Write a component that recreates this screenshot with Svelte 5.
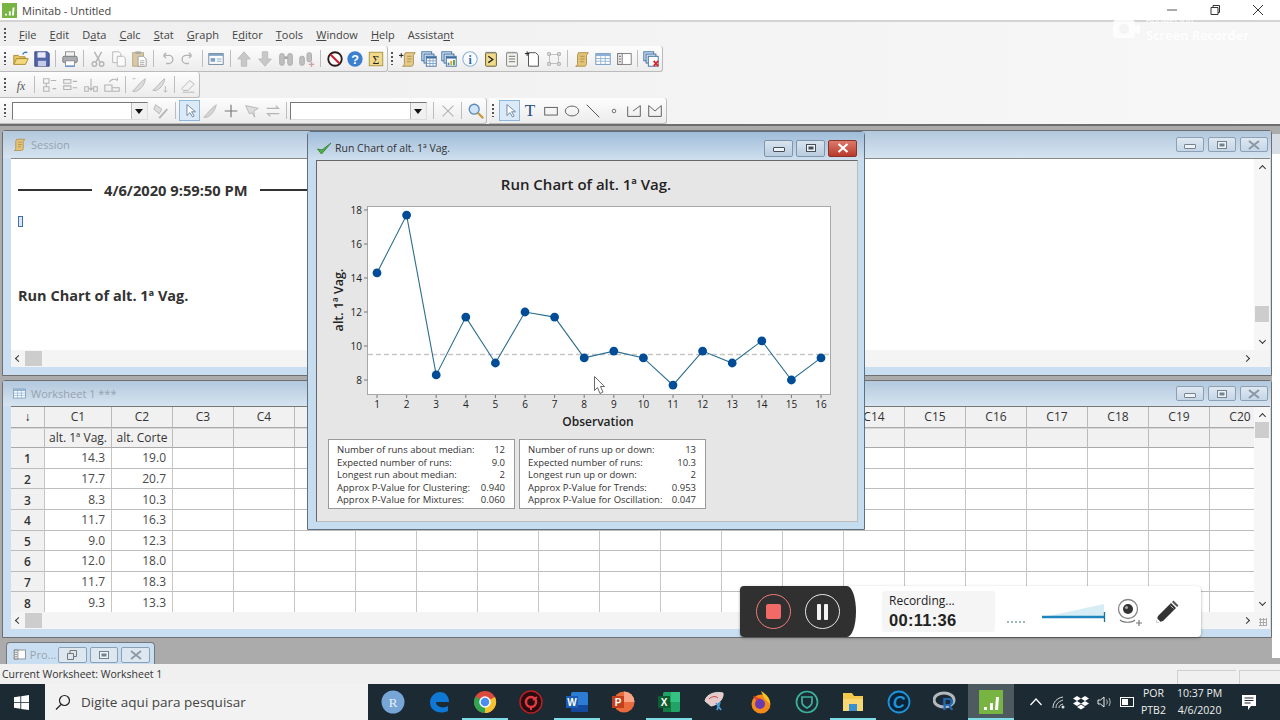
<script>
  const g = '#b4b4b4';
  const icons = {
    folder: `<path d="M2 16V6h5l1.500 1.500h6V10" fill="#e8c65e" stroke="#a8862c"/><path d="M2 16l3-6.500h13L15 16z" fill="#f3d77c" stroke="#a8862c"/><path d="M12 5c1-2.500 3-3 5-2" fill="none" stroke="#3c78c0" stroke-width="1.600"/>`,
    save: `<path d="M2 2h14l2 2v14H2z" fill="#5363a8" stroke="#39447f"/><rect x="5" y="2.500" width="9" height="6" fill="#e6e9f5"/><rect x="5.500" y="12" width="9" height="6" fill="#c5cbe6"/>`,
    print: `<rect x="5" y="2" width="10" height="6" fill="#f2f2f2" stroke="#8a8a8a"/><rect x="2" y="7" width="16" height="7" rx="1.500" fill="#a9adb3" stroke="#777"/><rect x="5" y="12" width="10" height="6" fill="#fff" stroke="#8a8a8a"/><path d="M5 18h10" stroke="#5d93cc" stroke-width="1.500"/>`,
    cut: `<path d="M6 2l6 11M14 2L8 13" stroke="${g}" stroke-width="1.600"/><circle cx="6" cy="15.500" r="2.500" fill="none" stroke="${g}" stroke-width="1.500"/><circle cx="14" cy="15.500" r="2.500" fill="none" stroke="${g}" stroke-width="1.500"/>`,
    copy: `<path d="M3 2h7l2 2v10H3z" fill="#fafafa" stroke="${g}"/><path d="M8 7h7l2 2v9H8z" fill="#fafafa" stroke="${g}"/>`,
    paste: `<rect x="3" y="3" width="12" height="15" fill="#d9c9a5" stroke="#b5a57e"/><rect x="6" y="1.500" width="6" height="3" fill="#aaa"/><path d="M9 7h6l3 3v8H9z" fill="#fff" stroke="#999"/><path d="M11 12h5M11 14h5M11 16h5" stroke="#aaa"/>`,
    undo: `<path d="M6 6h6a4 4 0 0 1 0 9H9M6 6l3-3M6 6l3 3" fill="none" stroke="${g}" stroke-width="1.500"/>`,
    redo: `<path d="M14 6H8a4 4 0 0 0 0 9h3M14 6l-3-3M14 6l-3 3" fill="none" stroke="${g}" stroke-width="1.500"/>`,
    win: `<rect x="2" y="4" width="16" height="12" fill="#fbfbfb" stroke="#6b8299"/><path d="M2 5.500h16" stroke="#7da1c6" stroke-width="2"/><rect x="4" y="9" width="5" height="4" fill="#7da1c6"/><path d="M11 10h5M11 12.500h5" stroke="#7da1c6"/>`,
    up: `<path d="M10 2l7 8h-4v8H7v-8H3z" fill="#c8c8c8" stroke="#bbb"/>`,
    down: `<path d="M10 18l7-8h-4V2H7v8H3z" fill="#c8c8c8" stroke="#bbb"/>`,
    bino: `<rect x="3" y="4" width="5" height="13" rx="2" fill="#c0c0c0" stroke="#a8a8a8"/><rect x="12" y="4" width="5" height="13" rx="2" fill="#c0c0c0" stroke="#a8a8a8"/><rect x="8" y="7" width="4" height="3" fill="#aaa"/>`,
    bino2: `<rect x="2" y="7" width="5" height="10" rx="2" fill="#c0c0c0" stroke="#a8a8a8"/><rect x="10" y="3" width="5" height="10" rx="2" fill="#c0c0c0" stroke="#a8a8a8"/><path d="M12 16h6M15 13v6" stroke="#c9a4a4" stroke-width="1.500"/>`,
    stop: `<circle cx="10" cy="10" r="7.500" fill="#fff" stroke="#2a1a1a" stroke-width="2"/><path d="M5 5l10 10" stroke="#c8222a" stroke-width="2.400"/>`,
    help: `<circle cx="10" cy="10" r="8.500" fill="#3b7fd0"/><text x="10" y="15" text-anchor="middle" font-size="14" font-weight="700" fill="#fff" font-family="Liberation Sans">?</text>`,
    sigma: `<rect x="2.500" y="2.500" width="15" height="15" fill="#efd98a" stroke="#a8913f"/><text x="10" y="15" text-anchor="middle" font-size="13" fill="#222" font-family="Liberation Serif">Σ</text>`,
    scriptp: `<path d="M7 3h11l-2 3v9c0 2-1 3-2 3H4c1 0 2-1 2-3V6z" fill="#e4c98a" stroke="#a98c4a"/><path d="M9 7h5M9 10h5M9 13h4" stroke="#a98c4a"/><path d="M0 6h5M2.500 3.500v5" stroke="#111"/>`,
    ws: `<rect x="2" y="2" width="11" height="10" fill="#cfe0f2" stroke="#3e6c9e"/><rect x="4.500" y="4.500" width="11" height="10" fill="#cfe0f2" stroke="#3e6c9e"/><rect x="7" y="7" width="11" height="11" fill="#fff" stroke="#3e6c9e"/><path d="M7 8.500h11" stroke="#3e6c9e" stroke-width="2"/><path d="M7 12h11M7 15h11M11 10v8M14.500 10v8" stroke="#7da1c6"/>`,
    gr: `<rect x="2" y="2" width="11" height="10" fill="#cfe0f2" stroke="#3e6c9e"/><rect x="4.500" y="4.500" width="11" height="10" fill="#cfe0f2" stroke="#3e6c9e"/><rect x="7" y="7" width="11" height="11" fill="#fff" stroke="#3e6c9e"/><path d="M7 8.500h11" stroke="#3e6c9e" stroke-width="2"/><path d="M9.500 17v-3" stroke="#3e8ec4" stroke-width="2"/><path d="M12.500 17v-5" stroke="#d9a62e" stroke-width="2"/><path d="M15.500 17v-6" stroke="#4c9a4c" stroke-width="2"/>`,
    info: `<circle cx="10" cy="10" r="8" fill="#f8fbff" stroke="#8fb1d4" stroke-width="1.200"/><text x="10" y="15" text-anchor="middle" font-size="13" font-weight="700" fill="#2d68a8" font-family="Liberation Serif">i</text>`,
    sess: `<rect x="4" y="3" width="12" height="15" rx="1" fill="#f0dc88" stroke="#57512c"/><path d="M4 3h12" stroke="#888" stroke-width="2" stroke-dasharray="1 1"/><path d="M7 7l5 3.500-5 3.500" fill="none" stroke="#222" stroke-width="1.500"/>`,
    note: `<rect x="4" y="3" width="12" height="15" rx="1" fill="#f4f4ee" stroke="#777"/><path d="M4 3h12" stroke="#999" stroke-width="2" stroke-dasharray="1 1"/><path d="M6.500 7h7M6.500 10h7M6.500 13h7" stroke="#666"/>`,
    newn: `<path d="M5 3h8l3 3v12H5z" fill="#fff" stroke="#444"/><path d="M1 4h5M3.500 1.500v5" stroke="#111"/>`,
    crop: `<rect x="5" y="5" width="10" height="10" fill="none" stroke="#bbb"/><path d="M3 3h3v3H3zM14 3h3v3h-3zM3 14h3v3H3zM14 14h3v3h-3z" fill="#e4e4e4" stroke="#aaa"/>`,
    script: `<path d="M6 3h11l-2 3v9c0 2-1 3-2 3H3c1 0 2-1 2-3V6z" fill="#e4c375" stroke="#a98c4a"/><path d="M8 7h5M8 10h5M8 13h4" stroke="#a98c4a"/>`,
    table: `<rect x="2" y="4" width="16" height="12" fill="#fff" stroke="#6d93bb"/><path d="M2 5.500h16" stroke="#8db1d4" stroke-width="2.500"/><path d="M2 9.500h16M2 12.500h16M7.500 7v9M12.500 7v9" stroke="#8db1d4"/>`,
    panel: `<rect x="3" y="4" width="15" height="12" fill="#fff" stroke="#777"/><rect x="3" y="4" width="5" height="12" fill="#eee" stroke="#777"/><path d="M4.500 7h2M4.500 10h2M4.500 13h2" stroke="#555"/>`,
    closeall: `<rect x="2" y="2" width="11" height="10" fill="#cfe0f2" stroke="#3e6c9e"/><rect x="4.500" y="4.500" width="11" height="10" fill="#cfe0f2" stroke="#3e6c9e"/><rect x="7" y="7" width="11" height="11" fill="#fff" stroke="#3e6c9e"/><path d="M13 12l5 6M18 12l-5 6" stroke="#d8262c" stroke-width="2"/>`,
    fx: `<text x="10" y="15" text-anchor="middle" font-size="13" font-style="italic" fill="#555" font-family="Liberation Serif">fx</text>`,
    g1: `<path d="M4 3h6v5H4zM4 12h6v5H4zM7 8v4M12 5h6M14 14h4" fill="none" stroke="${g}" stroke-width="1.200"/>`,
    g2: `<path d="M3 4h8v4H3zM3 11h8v4H3zM13 6h5M13 13h5" fill="none" stroke="${g}" stroke-width="1.200"/>`,
    g3: `<path d="M3 12h4v5H3zM13 12h4v5h-4zM10 3v13M8 13l2 3 2-3" fill="none" stroke="${g}" stroke-width="1.200"/>`,
    g4: `<path d="M2 10h8v7H2zM10 13h8v4h-8zM7 7c2-4 6-4 9-2M16 5V2" fill="none" stroke="${g}" stroke-width="1.200"/>`,
    pen1: `<path d="M3 17C8 12 12 6 17 3c0 5-4 11-10 14z" fill="#ddd" stroke="${g}"/><path d="M3 3l3 0" stroke="${g}"/>`,
    pen2: `<path d="M2 16C7 12 11 6 15 3c0 5-3 10-9 13z" fill="#ddd" stroke="${g}"/><path d="M16 11v7M14 16l2 2 2-2" fill="none" stroke="${g}"/>`,
    erase: `<path d="M3 14l9-9 5 4-7 7H5z" fill="#f2f2f2" stroke="${g}"/><path d="M4 18h13" stroke="${g}"/>`,
    paint: `<path d="M4 3l7 5-3 5-6-5z" fill="#ddd" stroke="${g}"/><path d="M17 8L8 18" stroke="${g}" stroke-width="2"/>`,
    arrow: `<path d="M7 3l0 13 3.500-3.500 3 5 2-1-3-5H17z" fill="#fff" stroke="#5e7a99"/>`,
    brush: `<path d="M3 17C7 13 12 6 17 3c-1 5-4 11-10 14z" fill="#d4d4d4" stroke="#bbb"/>`,
    plus: `<path d="M10 3v14M3 10h14" stroke="#777" stroke-width="1.300"/>`,
    flag: `<path d="M3 4l14 3-5 3 1 7-3-5-3 1z" fill="#ddd" stroke="${g}"/>`,
    swap: `<path d="M3 7h13l-3-3M17 13H4l3 3" fill="none" stroke="${g}" stroke-width="1.400"/>`,
    x: `<path d="M4 4l12 12M16 4L4 16" stroke="${g}" stroke-width="1.300"/>`,
    mag: `<circle cx="8" cy="8" r="5.500" fill="#cfe4f7" stroke="#5a8ab8" stroke-width="1.500"/><path d="M12 12l6 6" stroke="#c79a3c" stroke-width="2.500"/>`,
    t: `<text x="10" y="16" text-anchor="middle" font-size="19" fill="#234d86" font-family="Liberation Serif">T</text>`,
    rect: `<rect x="3" y="6" width="14" height="8.500" fill="none" stroke="#555"/>`,
    oval: `<ellipse cx="10" cy="10" rx="7.500" ry="5.500" fill="none" stroke="#555"/>`,
    line: `<path d="M3 3l14 14" stroke="#555" stroke-width="1.100"/>`,
    dot: `<circle cx="10" cy="10" r="2" fill="none" stroke="#666"/>`,
    poly: `<path d="M3 5v11h14V4L9 10" fill="none" stroke="#555"/>`,
    poly2: `<path d="M3 4v12h14V4l-7 6z" fill="none" stroke="#555"/>`
  };

  const menus = [['','F','ile'],['','E','dit'],['D','a','ta'],['','C','alc'],['','S','tat'],['','G','raph'],['E','d','itor'],['','T','ools'],['','W','indow'],['','H','elp'],['Assista','n','t']];
  const row1a = ['folder','save','|','print','|','cut','copy','paste','|','undo','redo','|','win','|','up','down','bino','bino2','|','stop','help','sigma'];
  const row1b = ['scriptp','ws','gr','info','sess','note','newn','crop','|','script','table','panel','|','closeall'];
  const row2 = ['fx','|','g1','g2','g3','g4','|','pen1','pen2','|','erase'];
  const row3a = ['paint','|','arrow*','brush','plus','flag','swap','|'];
  const row3c = ['|','x','|','mag'];
  const row3d = ['arrow*','t','rect','oval','line','dot','poly','poly2'];

  const col1 = ['14.3','17.7','8.3','11.7','9.0','12.0','11.7','9.3'];
  const col2 = ['19.0','20.7','10.3','16.3','12.3','18.0','18.3','13.3'];
  const colNames = Array.from({ length: 20 }, (_, i) => 'C' + (i + 1));

  const values = [14.3,17.7,8.3,11.7,9.0,12.0,11.7,9.3,9.7,9.3,7.7,9.7,9.0,10.3,8.0,9.3];
  const px = (i) => 377 + i * 29.6;
  const py = (v) => 380 - (v - 8) * 17;
  const points = values.map((v, i) => px(i) + ',' + py(v)).join(' ');
  const yTicks = [8, 10, 12, 14, 16, 18];

  const stats1 = [['Number of runs about median:','12'],['Expected number of runs:','9.0'],['Longest run about median:','2'],['Approx P-Value for Clustering:','0.940'],['Approx P-Value for Mixtures:','0.060']];
  const stats2 = [['Number of runs up or down:','13'],['Expected number of runs:','10.3'],['Longest run up or down:','2'],['Approx P-Value for Trends:','0.953'],['Approx P-Value for Oscillation:','0.047']];

  const apps = [
    { n: 'r' }, { n: 'edge' }, { n: 'chrome', on: 1 }, { n: 'bit' }, { n: 'word', on: 1 }, { n: 'ppt' }, { n: 'excel', on: 1 },
    { n: 'snip' }, { n: 'fox' }, { n: 'shield' }, { n: 'files', on: 1 }, { n: 'c' }, { n: 'rlogo' }, { n: 'mtb', on: 1, cur: 1 }
  ];
  const appIcons = {
    r: `<circle cx="12" cy="12" r="11.500" fill="#76a5d6"/><text x="12" y="17" text-anchor="middle" font-size="13" fill="#e8f0fa" font-family="Liberation Serif">R</text>`,
    edge: `<path d="M3 13C3 6 8 2 13 2c6 0 9 5 9 10H9c0 5 7 7 12 4v5c-6 3-17 2-18-8z" fill="#0f78d4"/>`,
    chrome: `<circle cx="12" cy="12" r="11" fill="#dc4a3d"/><path d="M12 12L2.500 6.500A11 11 0 0 0 12 23z" fill="#2fa54f"/><path d="M12 12v11A11 11 0 0 0 22 7z" fill="#f4c430"/><circle cx="12" cy="12" r="5" fill="#4a8cf0" stroke="#fff" stroke-width="1.500"/>`,
    bit: `<circle cx="12" cy="12" r="11" fill="#2a0c10" stroke="#b81f26" stroke-width="1.500"/><circle cx="12" cy="12" r="5" fill="none" stroke="#e33a3f" stroke-width="2.500"/><path d="M14 10l4-3M12 17v3" stroke="#e33a3f" stroke-width="2"/>`,
    word: `<rect x="6" y="2" width="17" height="20" rx="1.500" fill="#2b7cd3"/><rect x="6" y="15" width="17" height="7" fill="#134a9e"/><rect x="1" y="6" width="12" height="12" fill="#1a5bb8"/><text x="7" y="16" text-anchor="middle" font-size="10" font-weight="700" fill="#fff" font-family="Liberation Sans">W</text>`,
    ppt: `<circle cx="13" cy="12" r="10.500" fill="#e86a3d"/><path d="M13 12V1.500A10.500 10.500 0 0 1 23.500 12z" fill="#f7a487"/><rect x="1" y="6" width="12" height="12" fill="#c43e1c"/><text x="7" y="16" text-anchor="middle" font-size="10" font-weight="700" fill="#fff" font-family="Liberation Sans">P</text>`,
    excel: `<rect x="6" y="2" width="17" height="20" rx="1.500" fill="#21a366"/><rect x="14" y="2" width="9" height="10" fill="#33c481"/><rect x="6" y="12" width="8" height="10" fill="#107c41"/><rect x="1" y="6" width="12" height="12" fill="#0e5c2f"/><text x="7" y="16" text-anchor="middle" font-size="10" font-weight="700" fill="#fff" font-family="Liberation Sans">X</text>`,
    snip: `<path d="M2 11C3 4 13 1 20 3c1 6-5 12-12 13z" fill="#e9c9c9" stroke="#ddd"/><path d="M6 9c3-3 7-3 9-1" stroke="#b24a4a" fill="none"/><path d="M13 13l5 7M17 12l-3 8" stroke="#4f9ed8" stroke-width="1.800"/>`,
    fox: `<circle cx="12" cy="14" r="9.500" fill="#f28a1c"/><path d="M12 1c5 3 9 7 9 13L15 8z" fill="#f7c52a"/><path d="M4 6l4 6 5-3" fill="#e6452c"/><circle cx="11" cy="14" r="5" fill="#6a3bb0"/>`,
    shield: `<circle cx="12" cy="12" r="10.500" fill="none" stroke="#3bb39a" stroke-width="1.700"/><path d="M7 7h10v5c0 3-3 5-5 6-2-1-5-3-5-6z" fill="none" stroke="#3bb39a" stroke-width="1.700"/>`,
    files: `<path d="M2 3h9l2 3h9v15H2z" fill="#f2c94c"/><rect x="2" y="9" width="20" height="12" fill="#f8d775"/><rect x="8" y="14" width="8" height="7" fill="#3a8fd0"/>`,
    c: `<circle cx="12" cy="12" r="10.500" fill="#0c2438" stroke="#1f93d8" stroke-width="1.800"/><text x="12" y="18" text-anchor="middle" font-size="17" font-weight="700" font-style="italic" fill="#1f93d8" font-family="Liberation Sans">C</text>`,
    rlogo: `<ellipse cx="11" cy="10" rx="10" ry="7" fill="none" stroke="#b3b8bf" stroke-width="3"/><text x="15" y="20" text-anchor="middle" font-size="16" font-weight="700" fill="#2368b3" font-family="Liberation Sans">R</text>`,
    mtb: `<rect x="0" y="0" width="24" height="24" fill="#78b441"/><path d="M5 20v-3h3v3zM11 20v-7h3v7zM16 20l1-13h3l-1 13z" fill="#fff"/>`
  };
</script>

{#snippet ic(name, size = 20)}
  <svg class="ic" width={size} height={size} viewBox="0 0 20 20">{@html icons[name]}</svg>
{/snippet}

{#snippet items(list)}
  {#each list as it}
    {#if it === '|'}
      <span class="sep"></span>
    {:else if it.endsWith('*')}
      <span class="btn picked">{@render ic(it.slice(0, -1), 17)}</span>
    {:else}
      <span class="btn">{@render ic(it, 18)}</span>
    {/if}
  {/each}
{/snippet}

{#snippet winBtns()}
  <div class="wbtns">
    <span class="wb"><i class="mn"></i></span>
    <span class="wb"><i class="mx"></i></span>
    <span class="wb"><svg width="12" height="10" viewBox="0 0 12 10"><path d="M1 1l10 8M11 1L1 9" stroke="#8a97a5" stroke-width="2"/></svg></span>
  </div>
{/snippet}

{#snippet combo(w)}
  <span class="combo" style="width:{w}px"><span class="drop"></span></span>
{/snippet}

<div class="screen">
  <header class="titlebar">
    <svg width="15" height="15" viewBox="0 0 24 24" class="appicon">{@html appIcons.mtb}</svg>
    <span class="apptitle">Minitab - Untitled</span>
    <div class="caption">
      <svg width="14" height="14" viewBox="0 0 14 14"><path d="M2 7h10" stroke="#555"/></svg>
      <svg width="14" height="14" viewBox="0 0 14 14"><path d="M3 4.500h7v7H3zM5 4.500V2.500h6.500v7H10" fill="none" stroke="#333"/></svg>
      <svg width="14" height="14" viewBox="0 0 14 14"><path d="M2 2l10 10M12 2L2 12" stroke="#333"/></svg>
    </div>
  </header>

  <nav class="menubar">
    <span class="grip"></span>
    {#each menus as [a, k, b]}
      <span class="menu">{a}<u>{k}</u>{b}</span>
    {/each}
  </nav>

  <div class="tbrow">
    <div class="bar"><span class="grip"></span>{@render items(row1a)}</div>
    <div class="bar"><span class="grip"></span>{@render items(row1b)}</div>
  </div>
  <div class="tbrow">
    <div class="bar"><span class="grip"></span>{@render items(row2)}</div>
  </div>
  <div class="tbrow">
    <div class="bar third">
      <span class="grip"></span>
      {@render combo(136)}
      {@render items(row3a)}
      {@render combo(137)}
      {@render items(row3c)}
    </div>
    <div class="bar"><span class="grip"></span>{@render items(row3d)}</div>
  </div>

  <main class="mdi">
    <div class="backwin"></div>

    <section class="win session">
      <div class="wtitle">
        <svg width="15" height="15" viewBox="0 0 20 20" class="wicon">{@html icons.script}</svg>
        <span class="wname">Session</span>
        {@render winBtns()}
      </div>
      <div class="sbody">
        <div class="sdoc">
          <div class="stamp"><span class="rule a"></span><b>4/6/2020 9:59:50 PM</b><span class="rule"></span></div>
          <span class="caret"></span>
          <h2>Run Chart of alt. 1ª Vag.</h2>
        </div>
        <div class="vscroll">
          <span class="chev up"></span>
          <span class="vthumb"></span>
          <span class="chev dn"></span>
        </div>
      </div>
      <div class="hscroll"><span class="chev lf"></span><span class="hthumb"></span><span class="chev rt"></span></div>
    </section>

    <section class="win sheet">
      <div class="wtitle">
        <svg width="15" height="15" viewBox="0 0 20 20" class="wicon">{@html icons.table}</svg>
        <span class="wname">Worksheet 1 ***</span>
        {@render winBtns()}
      </div>
      <div class="sheetbody">
        <div class="grid">
          <div class="cell head corner">↓</div>
          {#each colNames as c}<div class="cell head">{c}</div>{/each}
          <div class="cell head name"></div>
          <div class="cell head name">alt. 1ª Vag.</div>
          <div class="cell head name">alt. Corte</div>
          {#each colNames.slice(2) as c}<div class="cell head name"></div>{/each}
          {#each col1 as v, r}
            <div class="cell rowno">{r + 1}</div>
            <div class="cell num">{v}</div>
            <div class="cell num">{col2[r]}</div>
            {#each colNames.slice(2) as c}<div class="cell"></div>{/each}
          {/each}
        </div>
        <div class="vscroll sv">
          <span class="chev up"></span>
          <span class="vthumb"></span>
          <span class="chev dn"></span>
        </div>
      </div>
      <div class="hscroll sh"><span class="chev lf"></span><span class="hthumb"></span><span class="chev rt"></span><span class="corner-grip"></span></div>
    </section>

    <section class="win chartwin">
      <div class="ctitle">
        <svg width="16" height="15" viewBox="0 0 16 15"><path d="M1.500 8l4 5L15 2 6 9z" fill="#4fb04a" stroke="#3d8a3a"/></svg>
        <span>Run Chart of alt. 1ª Vag.</span>
        <div class="cbtns">
          <span class="cb"><i class="mn dark"></i></span>
          <span class="cb"><i class="mx dark"></i></span>
          <span class="cb red"><svg width="12" height="10" viewBox="0 0 12 10"><path d="M1.500 1l9 8M10.500 1l-9 8" stroke="#fff" stroke-width="2.200"/></svg></span>
        </div>
      </div>
      <div class="cbody">
        <svg class="plot" width="542" height="278" viewBox="317 161 542 278">
          <text x="586" y="190" text-anchor="middle" class="ptitle">Run Chart of alt. 1ª Vag.</text>
          <rect x="367.500" y="206.500" width="463" height="188" fill="#fff" stroke="#a8a8a8"/>
          {#each yTicks as t}
            <path d="M364 {py(t)}h3.500" stroke="#777"/>
            <text x="362" y={py(t) + 3.500} text-anchor="end" class="tick">{t}</text>
          {/each}
          <line x1="368" x2="830" y1="354.500" y2="354.500" stroke="#c6c6c6" stroke-width="1.300" stroke-dasharray="5 3"/>
          <polyline points={points} fill="none" stroke="#2b6d8f" stroke-width="1.100"/>
          {#each values as v, i}
            <circle cx={px(i)} cy={py(v)} r="4.400" fill="#004c97"/>
            <path d="M{px(i)} 395v3" stroke="#777"/>
            <text x={px(i)} y="408" text-anchor="middle" class="tick">{i + 1}</text>
          {/each}
          <text x="598" y="426" text-anchor="middle" class="axis">Observation</text>
          <text transform="translate(343 300) rotate(-90)" text-anchor="middle" class="axis small">alt. 1ª Vag.</text>
          <path d="M594.500 376.500v14l3-3 2.500 6 3-1.500-2.500-5.500h4z" fill="#fff" stroke="#444" stroke-width=".8"/>
        </svg>
        <div class="statrow">
          <div class="stat first">
            {#each stats1 as [l, v]}<div class="sline"><span>{l}</span><span>{v}</span></div>{/each}
          </div>
          <div class="stat">
            {#each stats2 as [l, v]}<div class="sline"><span>{l}</span><span>{v}</span></div>{/each}
          </div>
        </div>
      </div>
    </section>

    <div class="projtab">
      <svg width="15" height="15" viewBox="0 0 20 20">{@html icons.panel}</svg>
      <span class="pro">Pro...</span>
      <span class="pb"><svg width="12" height="12" viewBox="0 0 12 12"><path d="M1.500 4.500h6v6h-6zM4 4.500V1.500h6.500v6h-3" fill="none" stroke="#777"/></svg></span>
      <span class="pb"><i class="mx"></i></span>
      <span class="pb"><svg width="12" height="10" viewBox="0 0 12 10"><path d="M1 1l10 8M11 1L1 9" stroke="#8a97a5" stroke-width="1.700"/></svg></span>
    </div>

    <div class="recorder">
      <div class="rdark">
        <span class="rbtn stopb"><i></i></span>
        <span class="rbtn pauseb"><i></i><i></i></span>
      </div>
      <div class="rclock">
        <span class="rlabel">Recording...</span>
        <strong>00:11:36</strong>
      </div>
      <span class="rdots"></span>
      <svg class="wave" width="64" height="22" viewBox="0 0 64 22"><path d="M2 16L62 3v13z" fill="#d6edf6"/><path d="M0 16h62" stroke="#1f86bd" stroke-width="2.400"/><path d="M62.500 11v10" stroke="#1f6f9d" stroke-width="1.300"/></svg>
      <svg class="cam" width="26" height="30" viewBox="0 0 26 30"><circle cx="11" cy="11" r="9.500" fill="#fff" stroke="#888" stroke-width="1.300"/><circle cx="11" cy="11" r="5" fill="#333"/><circle cx="9.500" cy="9.500" r="1.500" fill="#aaa"/><path d="M3 22c3 3 12 3 15 0M19 25h6M22 22v6" fill="none" stroke="#777" stroke-width="1.200"/></svg>
      <svg class="pen" width="24" height="24" viewBox="0 0 24 24"><path d="M1 23l2-7L16 3l5 5L8 21z" fill="#333"/><path d="M17 2l1.500-1.500 5 5L22 7z" fill="#555"/><path d="M1 23l1.300-4.500 3.200 3.200z" fill="#fff"/><path d="M15.500 5.500l3 3" stroke="#fff" stroke-width=".7"/></svg>
    </div>
  </main>

  <div class="watermark">
    <svg width="28" height="24" viewBox="0 0 28 24"><rect x="1" y="1" width="22" height="18" rx="3" fill="#fff" opacity=".8"/><circle cx="12" cy="10" r="5" fill="#f4f4f4"/><path d="M23 7l5-2v10l-5-2z" fill="#fff" opacity=".8"/></svg>
    <div class="wtext"><span>Apowersoft</span><span class="big">Screen Recorder</span></div>
  </div>

  <footer class="status">
    <span>Current Worksheet: Worksheet 1</span>
    <span class="panel p1"></span>
    <span class="panel p2"></span>
  </footer>

  <div class="taskbar">
    <span class="start">
      <svg width="15" height="15" viewBox="0 0 16 16"><path d="M0 2.300l6.800-1v6.300H0zM7.700 1.200L16 0v7.600H7.700zM0 8.400h6.800v6.300l-6.800-1zM7.700 8.400H16V16l-8.300-1.200z" fill="#fff"/></svg>
    </span>
    <div class="search">
      <svg width="16" height="16" viewBox="0 0 16 16"><circle cx="9.500" cy="6.500" r="5" fill="none" stroke="#222" stroke-width="1.200"/><path d="M6 10.500L1 15.500" stroke="#222" stroke-width="1.300"/></svg>
      <span>Digite aqui para pesquisar</span>
    </div>
    {#each apps as a}
      <span class="app" class:on={a.on} class:cur={a.cur}>
        <svg width="24" height="24" viewBox="0 0 24 24">{@html appIcons[a.n]}</svg>
      </span>
    {/each}
    <div class="tray">
      <svg width="14" height="10" viewBox="0 0 14 10"><path d="M1.500 8L7 2l5.500 6" fill="none" stroke="#fff" stroke-width="1.200"/></svg>
      <svg width="14" height="14" viewBox="0 0 14 14"><path d="M2 13C2 7 6 3 12 2M5 13c0-4 2-6 7-8M8 13c0-2 1-3 4-4" fill="none" stroke="#ddd"/><circle cx="12" cy="12" r="1.500" fill="#ddd"/></svg>
      <svg width="16" height="15" viewBox="0 0 16 15"><path d="M4 1l4 2.500L4 6 0 3.500zM12 1l4 2.500L12 6 8 3.500zM4 6l4 2.500L4 11 0 8.500zM12 6l4 2.500-4 2.500-4-2.500zM4 12l4-2.500 4 2.500-4 2.500z" fill="#fff"/></svg>
      <svg width="15" height="14" viewBox="0 0 15 14"><path d="M1 5h2.500L7 2v10L3.500 9H1z" fill="none" stroke="#eee"/><path d="M9.500 4.500c1 1.500 1 3.500 0 5M12 3c1.500 2.500 1.500 5.500 0 8" fill="none" stroke="#bbb"/></svg>
      <svg width="15" height="10" viewBox="0 0 15 10"><rect x=".5" y=".5" width="13" height="9" fill="none" stroke="#fff"/><rect x="2" y="2" width="6" height="6" fill="#fff"/></svg>
      <div class="lang"><span>POR</span><span>PTB2</span></div>
      <div class="clock"><span>10:37 PM</span><span>4/6/2020</span></div>
      <svg class="notif" width="16" height="17" viewBox="0 0 16 17"><path d="M1 1h14v11h-5l-3 4v-4H1z" fill="#fff"/><path d="M3.500 4h9M3.500 6.500h9M3.500 9h6" stroke="#1b2a33"/></svg>
    </div>
  </div>
</div>

<style>
  :global(body) {
    margin: 0;
    background: #ababab;
  }
  .screen {
    width: 1280px;
    height: 720px;
    display: flex;
    flex-direction: column;
    overflow: hidden;
    position: relative;
    font-family: "Open Sans", "Noto Sans", sans-serif;
    color: #333;
  }
  .ic {
    display: block;
  }

  .titlebar {
    height: 22px;
    flex: none;
    box-sizing: border-box;
    background: #fff;
    border-bottom: 2px solid #d4d4d4;
    display: flex;
    align-items: center;
    padding-left: 2px;
    font-size: 11px;
    color: #444;
  }
  .appicon {
    margin-right: 5px;
  }
  .caption {
    margin-left: auto;
    display: flex;
    gap: 29px;
    margin-right: 15px;
  }

  .menubar {
    height: 24px;
    flex: none;
    box-sizing: border-box;
    display: flex;
    align-items: center;
    gap: 13.100px;
    padding-left: 4px;
    background: linear-gradient(90deg, #efefef, #f7f7f7);
    font-size: 11px;
    color: #444;
  }
  .menubar .grip {
    margin-right: 0;
  }
  .menu u {
    text-underline-offset: 1px;
  }
  .grip {
    width: 2px;
    height: 13px;
    flex: none;
    margin: 0 4.500px 0 0;
    background: repeating-linear-gradient(180deg, #555 0 2px, transparent 2px 4px);
  }

  .tbrow {
    height: 26px;
    flex: none;
    display: flex;
    align-items: stretch;
    background: linear-gradient(90deg, #efefef, #f7f7f7);
  }
  .bar {
    display: flex;
    align-items: center;
    box-sizing: border-box;
    padding: 0 0 0 4px;
    margin-right: 0;
    background: linear-gradient(180deg, #fdfdfd, #ececec);
    border-right: 1px solid #bbb;
    border-bottom: 1px solid #bbb;
    border-radius: 0 3px 3px 0;
  }
  .bar + .bar {
    padding-left: 3px;
  }
  .third {
    margin-right: 2px;
  }
  .third .grip {
    margin-right: 6px;
  }
  .btn {
    width: 20.900px;
    height: 21px;
    flex: none;
    display: flex;
    align-items: center;
    justify-content: center;
    box-sizing: border-box;
  }
  .picked {
    border: 1px solid #8fb8dc;
    background: #dbeaf7;
  }
  .sep {
    width: 1px;
    height: 17px;
    margin: 0 3px;
    flex: none;
    background: #bdbdbd;
  }
  .combo {
    height: 18px;
    flex: none;
    box-sizing: border-box;
    background: #fff;
    border: 1px solid #777;
    border-right-color: #ddd;
    border-bottom-color: #ddd;
    display: flex;
    justify-content: flex-end;
    margin-right: 3px;
  }
  .drop {
    width: 15px;
    background: #f0f0f0;
    border-left: 1px solid #bbb;
    position: relative;
  }
  .drop::after {
    content: "";
    position: absolute;
    left: 3px;
    top: 6px;
    border: 4px solid transparent;
    border-top: 5px solid #111;
  }

  .mdi {
    flex: 1;
    position: relative;
    background: #ababab;
    border-top: 2px solid #6e6e6e;
    box-sizing: border-box;
    overflow: hidden;
  }
  .backwin {
    position: absolute;
    left: 1272px;
    top: 8px;
    width: 8px;
    height: 504px;
    background: #fff;
    border-top: 20px solid #d6dde4;
  }

  .win {
    position: absolute;
    box-sizing: border-box;
    display: flex;
    flex-direction: column;
    background: #c9dff1;
    border: 1px solid #6f6f6f;
    border-radius: 3px 3px 0 0;
  }
  .session {
    left: 2px;
    top: 4px;
    width: 1270px;
    height: 246px;
  }
  .sheet {
    left: 2px;
    top: 254px;
    width: 1270px;
    height: 258px;
  }
  .wtitle {
    height: 27px;
    flex: none;
    display: flex;
    align-items: center;
    background: linear-gradient(180deg, #b3c8dd, #d6e4f0);
    padding: 0 3px 0 9px;
    font-size: 11px;
    color: #97a2ad;
  }
  .sheet .wtitle {
    height: 25px;
  }
  .wicon {
    margin-right: 4px;
  }
  .wbtns {
    margin-left: auto;
    display: flex;
    gap: 4px;
  }
  .wb {
    width: 28px;
    height: 15px;
    box-sizing: border-box;
    border: 1px solid #8ba0b5;
    border-radius: 2px;
    background: linear-gradient(180deg, #dfe8f1, #c5d6e6);
    display: flex;
    align-items: center;
    justify-content: center;
  }
  .mn {
    width: 10px;
    height: 3px;
    margin-top: 3px;
    border: 1px solid #75828f;
    background: #eef3f8;
    border-radius: 1px;
    display: block;
  }
  .mx {
    width: 8px;
    height: 6px;
    border: 1px solid #75828f;
    box-shadow: inset 0 0 0 1.500px #eef3f8;
    background: #75828f;
    display: block;
  }

  .sbody {
    flex: 1;
    display: flex;
    margin: 0 1px 0 8px;
    background: #fff;
    border-top: 1px solid #888;
    min-height: 0;
  }
  .sdoc {
    flex: 1;
    padding: 21px 0 0 7px;
    color: #333;
  }
  .stamp {
    display: flex;
    align-items: center;
    gap: 12px;
    font-size: 14.700px;
    height: 20px;
  }
  .rule {
    width: 60px;
    height: 2px;
    background: #333;
  }
  .rule.a {
    width: 74px;
  }
  .caret {
    display: block;
    width: 3px;
    height: 9px;
    margin: 16px 0 0 0;
    border: 1px solid #3f6fb0;
    background: #dbe7f5;
  }
  h2 {
    margin: 60px 0 0;
    font-size: 14.500px;
    font-weight: 700;
    line-height: 18px;
  }
  .vscroll {
    width: 16px;
    flex: none;
    background: #f6f6f6;
    display: flex;
    flex-direction: column;
    align-items: center;
    padding: 7px 0;
    box-sizing: border-box;
  }
  .vthumb {
    width: 14px;
    height: 16px;
    background: #cdcdcd;
    margin-top: auto;
    margin-bottom: 16px;
  }
  .sv .vthumb {
    margin-top: 3px;
  }
  .sv .chev.dn {
    margin-top: auto;
  }
  .hscroll {
    height: 17px;
    flex: none;
    margin: 0 1px 8px 8px;
    background: #f4f4f4;
    display: flex;
    align-items: center;
    padding-left: 5px;
    position: relative;
  }
  .hthumb {
    width: 17px;
    height: 15px;
    background: #cdcdcd;
    margin-left: 4px;
  }
  .chev {
    width: 5px;
    height: 5px;
    flex: none;
    box-sizing: border-box;
    border-top: 1.500px solid #333;
    border-left: 1.500px solid #333;
    display: block;
  }
  .chev.up {
    transform: rotate(45deg);
  }
  .chev.dn {
    transform: rotate(225deg);
  }
  .chev.lf {
    transform: rotate(-45deg);
  }
  .chev.rt {
    transform: rotate(135deg);
    margin-left: auto;
    margin-right: 21px;
  }
  .corner-grip {
    position: absolute;
    right: 3px;
    bottom: 3px;
    width: 8px;
    height: 8px;
    background: radial-gradient(circle, #aaa 1px, transparent 1.200px) 0 0 / 3px 3px;
  }

  .sheetbody {
    flex: none;
    height: 206px;
    display: flex;
    margin: 0 1px 0 8px;
    border-top: 1px solid #777;
    box-sizing: border-box;
    overflow: hidden;
    background: #fff;
  }
  .grid {
    flex: 1;
    min-width: 0;
    overflow: hidden;
    display: grid;
    grid-template-columns: 34px 67px 61px repeat(18, 61px);
    grid-auto-rows: 20.600px;
    font-size: 12px;
  }
  .cell {
    box-sizing: border-box;
    border-right: 1px solid #c6c6c6;
    border-bottom: 1px solid #bdbdbd;
    display: flex;
    align-items: center;
    justify-content: center;
    white-space: nowrap;
    overflow: hidden;
  }
  .head {
    background: #f1f1f1;
    color: #333;
    border-color: #a9a9a9;
    border-right-color: #bbb;
    font-weight: 500;
  }
  .head.name {
    border-top: 1px solid #d8d8d8;
  }
  .corner {
    font-weight: 700;
    color: #111;
  }
  .rowno {
    background: #f1f1f1;
    font-weight: 600;
    padding-top: 2px;
  }
  .num {
    justify-content: flex-end;
    padding-right: 6px;
    color: #4a4a4a;
  }

  .chartwin {
    left: 307px;
    top: 5px;
    width: 558px;
    height: 399px;
    border-color: #5f6f80;
    background: #c6dcef;
    border-radius: 4px 4px 0 0;
    padding: 0 6px 7px 8px;
    z-index: 3;
  }
  .ctitle {
    height: 28px;
    flex: none;
    box-sizing: border-box;
    margin: 0 -6px 0 -8px;
    padding: 4px 7px 0 8px;
    display: flex;
    align-items: center;
    gap: 3px;
    background: linear-gradient(180deg, #9fbcd9, #cfdfee);
    font-size: 10.500px;
    color: #333;
  }
  .cbtns {
    margin-left: auto;
    display: flex;
    gap: 3px;
  }
  .cb {
    width: 29px;
    height: 17px;
    box-sizing: border-box;
    border: 1px solid #7f95aa;
    border-radius: 2px;
    background: linear-gradient(180deg, #d8e4ef, #b9ccde);
    display: flex;
    align-items: center;
    justify-content: center;
  }
  .cb.red {
    background: linear-gradient(180deg, #dc7a6c, #b93a2c);
    border-color: #8a3328;
  }
  .mn.dark, .mx.dark {
    border-color: #454f59;
  }
  .mx.dark {
    background: #454f59;
  }
  .cbody {
    flex: 1;
    background: #e6e6e6;
    border: 1px solid #666;
    border-right-color: #bbb;
    border-bottom-color: #bbb;
    display: flex;
    flex-direction: column;
    min-height: 0;
  }
  .plot {
    display: block;
    flex: none;
  }
  .ptitle {
    font: 600 15px "Open Sans", sans-serif;
    fill: #222;
  }
  .tick {
    font: 10px "Open Sans", sans-serif;
    fill: #222;
  }
  .axis {
    font: 600 12px "Open Sans", sans-serif;
    fill: #222;
  }
  .axis.small {
    font-size: 12.500px;
  }
  .statrow {
    display: flex;
    gap: 4px;
    padding-left: 11px;
  }
  .stat {
    width: 187px;
    height: 70px;
    box-sizing: border-box;
    background: #fff;
    border: 1px solid #9a9a9a;
    padding: 4px 9px 4px 8px;
    font-size: 9.500px;
    line-height: 12.600px;
    color: #333;
  }
  .sline {
    display: flex;
    justify-content: space-between;
    white-space: nowrap;
  }

  .projtab {
    position: absolute;
    left: 6px;
    top: 516px;
    width: 149px;
    height: 22px;
    box-sizing: border-box;
    display: flex;
    align-items: center;
    gap: 3px;
    padding: 2px 4px 0 5px;
    background: #c9dff1;
    border: 1px solid #777;
    border-bottom: none;
    border-radius: 4px 4px 0 0;
    font-size: 11px;
    color: #9aa4ae;
  }
  .pro {
    width: 25px;
  }
  .pb {
    width: 29px;
    height: 16px;
    box-sizing: border-box;
    border: 1px solid #8ba0b5;
    border-radius: 2px;
    background: #dde7f0;
    display: flex;
    align-items: center;
    justify-content: center;
  }

  .recorder {
    position: absolute;
    left: 740px;
    top: 460px;
    width: 461px;
    height: 51px;
    background: #fff;
    border-radius: 4px;
    display: flex;
    align-items: center;
    box-shadow: 0 1px 3px rgba(0,0,0,.35);
    z-index: 4;
    overflow: hidden;
  }
  .rdark {
    width: 116px;
    height: 100%;
    flex: none;
    background: #303030;
    border-radius: 0 9px 9px 0 / 0 50% 50% 0;
    display: flex;
    align-items: center;
    gap: 14px;
    padding-left: 16px;
    box-sizing: border-box;
  }
  .rbtn {
    width: 35px;
    height: 35px;
    box-sizing: border-box;
    border-radius: 50%;
    flex: none;
    display: flex;
    align-items: center;
    justify-content: center;
    gap: 3px;
  }
  .stopb {
    border: 1px solid #ee7b78;
  }
  .stopb i {
    width: 15px;
    height: 15px;
    border-radius: 2px;
    background: #f26a68;
  }
  .pauseb {
    border: 1px solid #e8e8e8;
  }
  .pauseb i {
    width: 4px;
    height: 16px;
    border-radius: 1px;
    background: #f2f2f2;
  }
  .rclock {
    width: 113px;
    height: 41px;
    margin-left: 26px;
    flex: none;
    box-sizing: border-box;
    padding: 1px 0 0 7px;
    background: #f5f5f5;
    border-radius: 3px;
    display: flex;
    flex-direction: column;
    color: #222;
    font-size: 12px;
  }
  .rclock strong {
    font: 700 16.500px "Liberation Sans", sans-serif;
    letter-spacing: .3px;
    margin-top: 2px;
  }
  .rdots {
    width: 18px;
    height: 2px;
    margin: 20px 17px 0 12px;
    flex: none;
    background: repeating-linear-gradient(90deg, #9fb4bd 0 2px, transparent 2px 4px);
  }
  .wave {
    flex: none;
  }
  .cam {
    flex: none;
    margin-left: 11px;
    margin-top: 2px;
  }
  .pen {
    flex: none;
    margin-left: 12px;
  }

  .watermark {
    position: absolute;
    left: 1112px;
    top: 13px;
    display: flex;
    gap: 4px;
    z-index: 2;
    color: #fff;
    pointer-events: none;
  }
  .watermark svg {
    margin-top: 6px;
  }
  .wtext {
    display: flex;
    flex-direction: column;
    font-size: 9px;
    line-height: 13px;
    padding-left: 2px;
  }
  .wtext .big {
    font-size: 13px;
    line-height: 18px;
    font-weight: 600;
  }

  .status {
    height: 20px;
    flex: none;
    background: #f0f0f0;
    display: flex;
    align-items: center;
    padding-left: 2px;
    font-size: 10.500px;
    color: #333;
    gap: 3px;
  }
  .panel {
    height: 14px;
    align-self: flex-end;
    box-sizing: border-box;
    border: 1px solid #cfcfcf;
    border-bottom: none;
    border-right: none;
  }
  .p1 {
    margin-left: auto;
    width: 59px;
  }
  .p2 {
    width: 41px;
  }

  .taskbar {
    height: 36px;
    flex: none;
    background: #1b2a33;
    display: flex;
    align-items: stretch;
    color: #eee;
  }
  .start {
    width: 45px;
    flex: none;
    display: flex;
    align-items: center;
    justify-content: center;
    padding-right: 3px;
    box-sizing: border-box;
  }
  .search {
    width: 323px;
    margin-right: 2px;
    flex: none;
    background: #f2f2f2;
    display: flex;
    align-items: center;
    gap: 10px;
    padding-left: 10px;
    box-sizing: border-box;
    font-size: 13.500px;
    color: #444;
  }
  .app {
    width: 46px;
    flex: none;
    display: flex;
    align-items: center;
    justify-content: center;
    box-sizing: border-box;
    position: relative;
  }
  .app.on {
    border-bottom: 2px solid #7fdde6;
    padding-top: 2px;
    background-clip: padding-box;
  }
  .app.cur {
    background: #4d5a60;
  }
  .tray {
    flex: 1;
    display: flex;
    align-items: center;
    padding-left: 15px;
    gap: 8px;
    font-size: 10.500px;
  }
  .lang, .clock {
    display: flex;
    flex-direction: column;
    align-items: center;
    line-height: 17px;
  }
  .lang {
    margin-left: -2px;
  }
  .clock {
    margin-left: 3px;
  }
  .notif {
    margin-left: 11px;
  }
</style>
